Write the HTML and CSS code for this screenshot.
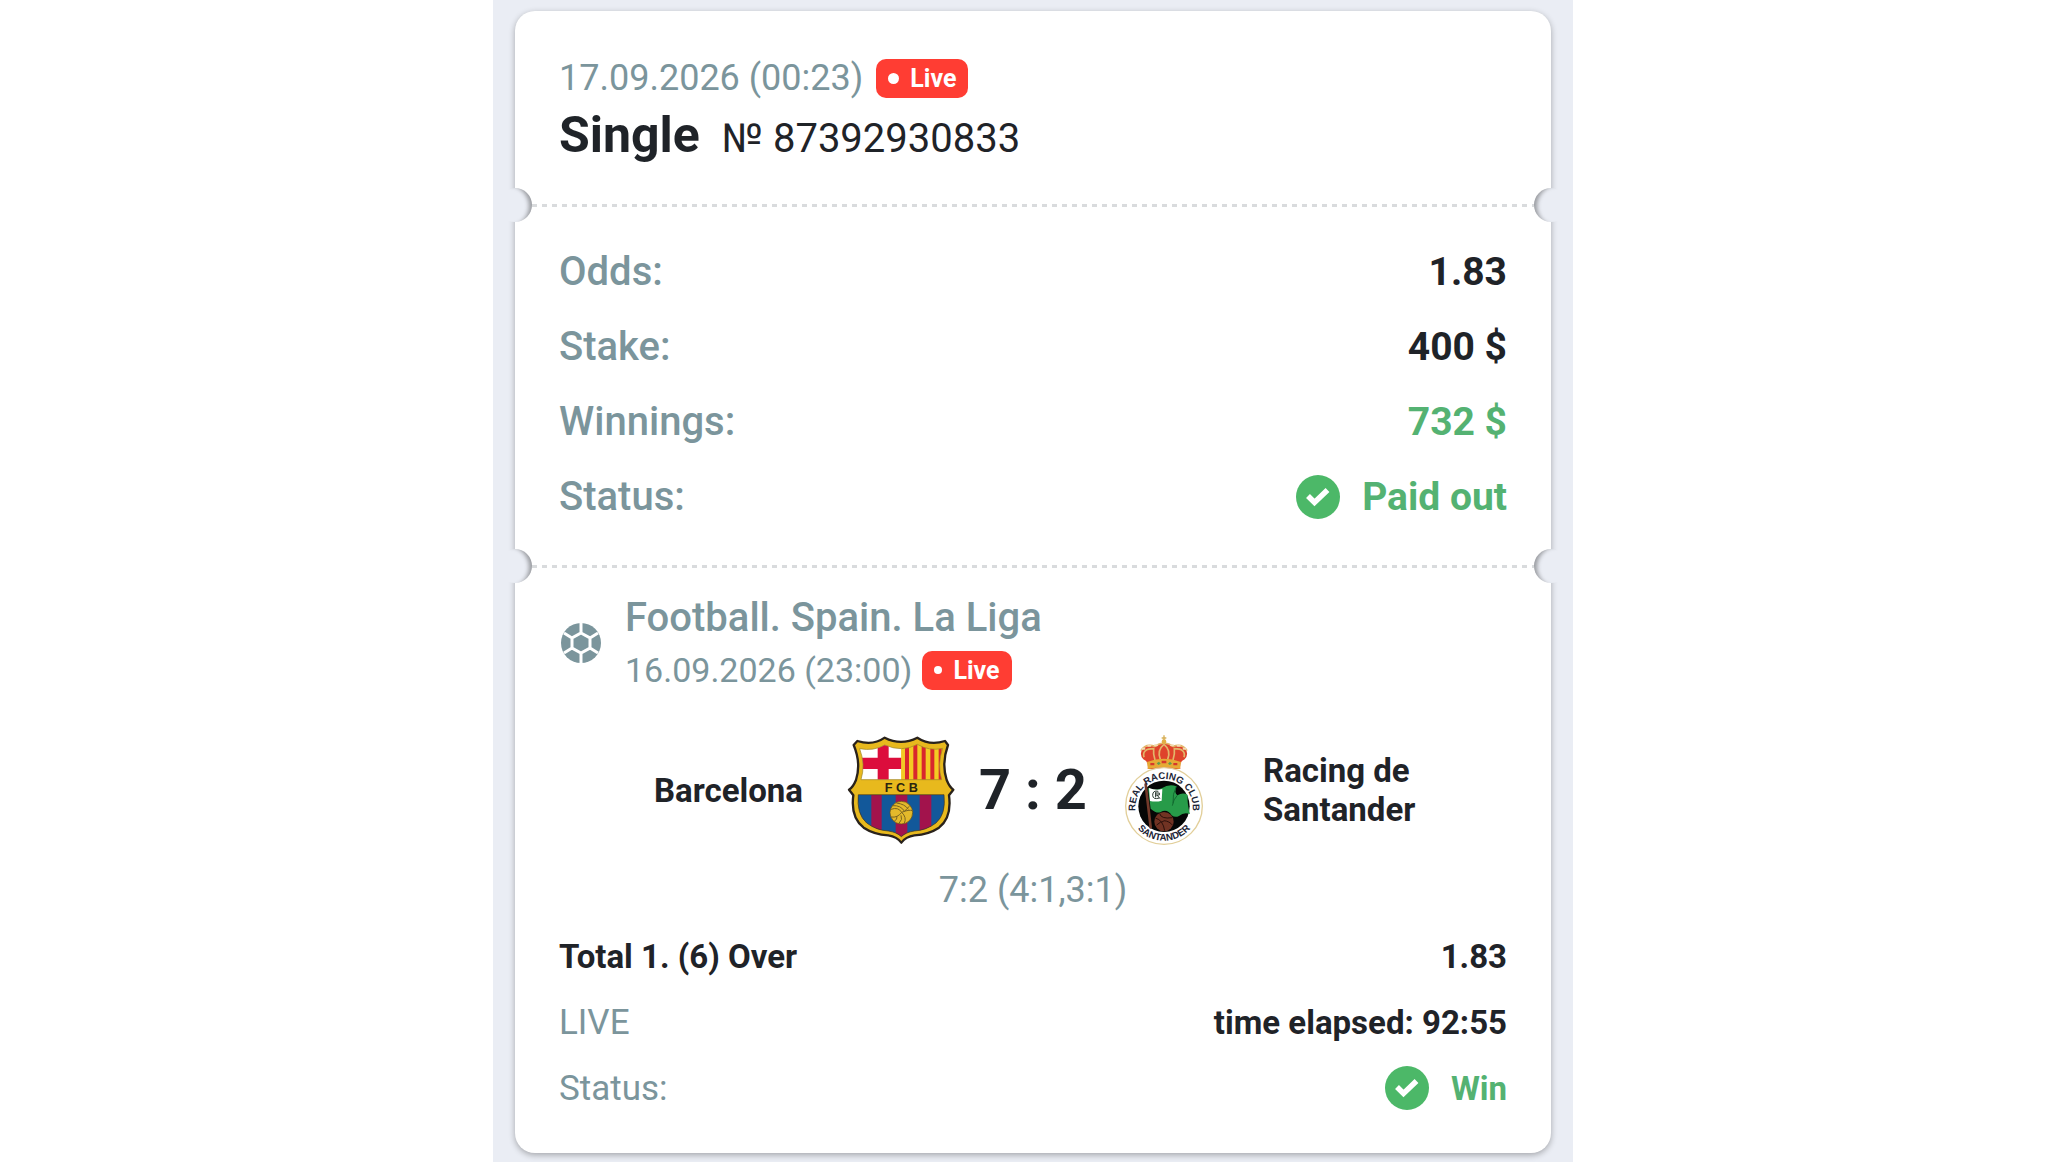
FILE: index.html
```html
<!DOCTYPE html>
<html lang="en">
  <head>
    <meta charset="UTF-8" />
    <meta name="viewport" content="width=device-width, initial-scale=1.0" />
    <link rel="stylesheet" href="styles.css">
    <title>Single № 87392930833</title>
  </head>
  <body>
    <svg class="sprite" aria-hidden="true">
      <symbol id="check" viewBox="0 0 44 44">
        <circle cx="22" cy="22" r="22" fill="#4cb868"/>
        <path d="M12 21 L18.500 27.500 L31.500 15" fill="none" stroke="#fff" stroke-width="5.500"/>
      </symbol>
    </svg>

    <main class="page">
      <article class="ticket">
        <header class="ticket-head">
          <div class="date-row">
            <time>17.09.2026 (00:23)</time>
            <span class="live">Live</span>
          </div>
          <div class="title-row">
            <h1>Single</h1>
            <span class="number">№ 87392930833</span>
          </div>
        </header>

        <section class="summary tear">
          <dl class="rows">
            <div class="row"><dt>Odds:</dt><dd>1.83</dd></div>
            <div class="row"><dt>Stake:</dt><dd>400 $</dd></div>
            <div class="row"><dt>Winnings:</dt><dd class="green">732 $</dd></div>
            <div class="row">
              <dt>Status:</dt>
              <dd class="green"><svg class="check"><use href="#check"/></svg>Paid out</dd>
            </div>
          </dl>
        </section>

        <section class="event tear">
          <div class="league">
            <svg class="ball" viewBox="0 0 40 40" aria-hidden="true">
              <circle cx="20" cy="20" r="20" fill="#7b959c"/>
              <path d="M20 10 L29 15 V25 L20 30 L11 25 V15 Z M20 0 V10 M20 30 V40 M29 15 L37 10 M29 25 L37 30 M11 15 L3 10 M11 25 L3 30" fill="none" stroke="#fff" stroke-width="3"/>
            </svg>
            <div>
              <h2>Football. Spain. La Liga</h2>
              <div class="date-row small">
                <time>16.09.2026 (23:00)</time>
                <span class="live">Live</span>
              </div>
            </div>
          </div>

          <div class="match">
            <div class="team home">Barcelona</div>
            <svg class="crest" viewBox="49 45 330 330" role="img" aria-label="Barcelona crest">
              <defs>
                <clipPath id="fcb-top"><path d="M90 86 Q132 94 165 75 Q190 86 215 86 Q240 86 263 73 Q298 94 339 85 Q322 134 336 179 H94 Q108 134 90 86 Z"/></clipPath>
                <clipPath id="fcb-bottom"><path d="M86 224 H343 Q350 282 319 309 Q290 331 254 333 Q228 337 215 350 Q202 337 176 333 Q140 331 111 309 Q80 282 86 224 Z"/></clipPath>
              </defs>
              <path d="M83 63 Q130 78 165 53 Q214 78 263 53 Q300 78 346 63 L355 75 Q335 130 351 180 Q360 202 371 209 L358 226 Q367 292 328 323 Q298 343 254 346 Q228 350 215 368 Q202 350 176 346 Q132 343 102 323 Q62 292 71 226 L58 209 Q70 202 79 180 Q95 130 72 75 Z" fill="#e8b91d" stroke="#29221b" stroke-width="7" stroke-linejoin="round"/>
              <g clip-path="url(#fcb-top)">
                <path d="M80 60 H215 V185 H80 Z" fill="#fff"/>
                <path d="M144 60 H177 V185 H144 Z M80 113 H215 V147 H80 Z" fill="#dc0d3c"/>
                <path d="M215 60 H345 V185 H215 Z" fill="#f3cb23"/>
                <path d="M226 60 H238 V185 H226 Z M251 60 H263 V185 H251 Z M276 60 H288 V185 H276 Z M302 60 H314 V185 H302 Z M327 60 H336 V185 H327 Z" fill="#d8272d"/>
              </g>
              <path d="M90 86 Q132 94 165 75 Q190 86 215 86 Q240 86 263 73 Q298 94 339 85 Q322 134 336 179 H94 Q108 134 90 86 Z" fill="none" stroke="#9a8327" stroke-width="2"/>
              <text class="fcb" x="215" y="216">F C B</text>
              <g clip-path="url(#fcb-bottom)">
                <path d="M80 224 H350 V350 H80 Z" fill="#12589a"/>
                <path d="M125 224 H156 V350 H125 Z M198 224 H233 V350 H198 Z M270 224 H305 V350 H270 Z" fill="#a2134c"/>
              </g>
              <path d="M86 224 H343 Q350 282 319 309 Q290 331 254 333 Q228 337 215 350 Q202 337 176 333 Q140 331 111 309 Q80 282 86 224 Z" fill="none" stroke="#3b3020" stroke-width="2"/>
              <circle cx="215" cy="278" r="34" fill="#e3b92b" stroke="#5d4b16" stroke-width="2"/>
              <path d="M184 268 Q206 260 216 277 Q204 294 184 291 M200 249 Q226 252 236 268 M188 257 Q214 255 225 275 M216 277 Q238 268 248 272 M216 277 Q232 292 224 310 M214 286 Q220 298 208 310 M202 289 Q203 300 194 303 M240 258 Q231 266 226 273" fill="none" stroke="#7b6420" stroke-width="3"/>
            </svg>
            <div class="score">7 : 2</div>
            <svg class="crest" viewBox="29 45 330 330" role="img" aria-label="Racing de Santander crest">
              <defs>
                <path id="rrc-top" d="M106 276 A86 86 0 1 1 276 276"/>
                <path id="rrc-bottom" d="M89 282 A105 105 0 0 0 293 282"/>
                <clipPath id="rrc-in"><circle cx="191" cy="259" r="77"/></clipPath>
              </defs>
              <path d="M142 147 Q146 125 129 118 Q116 103 126 88 Q140 73 166 79 Q178 67 191 72 Q204 67 216 79 Q242 73 256 88 Q266 103 253 118 Q236 125 240 147 Z" fill="#df432b"/>
              <path d="M131 112 Q124 86 160 86 Q158 102 164 120 M251 112 Q258 86 222 86 Q224 102 218 120 M180 118 Q169 91 191 73 Q213 91 202 118 M122 92 Q135 70 164 79 Q180 68 191 70 Q202 68 218 79 Q247 70 260 92" fill="none" stroke="#e2b66a" stroke-width="5"/>
              <path d="M140 126 Q191 106 242 126 L239 147 Q191 137 143 147 Z" fill="#e6aa35"/>
              <path d="M150 129 h12 v7 h-12 Z M219 129 h12 v7 h-12 Z M184 122 h14 v8 h-14 Z" fill="#d6382c"/>
              <path d="M169 130 l7 -5 l5 6 l-7 4 Z M203 131 l6 -6 l6 6 l-7 4 Z" fill="#5f9c4f"/>
              <path d="M191 46 V71 M184 54 H198" stroke="#d6ae55" stroke-width="4"/>
              <circle cx="191" cy="65" r="7" fill="#e2b044"/>
              <path d="M126 86 h6 M144 77 h6 M164 76 h6 M212 76 h6 M232 77 h6 M250 86 h6" stroke="#f1dcb5" stroke-width="6" stroke-linecap="round"/>
              <circle cx="191" cy="258" r="115" fill="#fff" stroke="#e2cf9a" stroke-width="4"/>
              <circle cx="191" cy="259" r="77" fill="#050706"/>
              <g clip-path="url(#rrc-in)">
                <circle cx="191" cy="305" r="29" fill="#713323"/>
                <path d="M165 294 Q188 300 193 332 M178 280 Q181 298 216 293 M190 302 Q207 303 217 316 M169 315 Q181 304 190 304" fill="none" stroke="#2c110c" stroke-width="3"/>
              </g>
              <path d="M143 204 Q166 213 184 205 Q207 190 228 199 Q221 219 231 226 Q248 216 262 225 Q260 252 269 282 Q250 276 236 288 Q224 294 214 286 Q201 265 181 276 Q170 282 151 266 Z" fill="#279b49"/>
              <path d="M228 199 Q216 222 218 250 M231 226 Q219 238 216 257" fill="none" stroke="#126a30" stroke-width="3"/>
              <path d="M146 204 Q166 212 186 207 L184 242 Q167 247 149 243 Z" fill="#fff"/>
              <path d="M174 214 Q157 210 157 226 Q158 240 177 234 M166 217 V232 M164 219 H177 V225 H165 M170 225 L179 236" fill="none" stroke="#28352d" stroke-width="3"/>
              <path d="M136 193 L151 322" stroke="#723a2a" stroke-width="8" stroke-linecap="round"/>
              <text class="rrc"><textPath href="#rrc-top" startOffset="50%">REAL RACING CLUB</textPath></text>
              <text class="rrc"><textPath href="#rrc-bottom" startOffset="50%">SANTANDER</textPath></text>
            </svg>
            <div class="team away">Racing de Santander</div>
          </div>
          <p class="periods">7:2 (4:1,3:1)</p>

          <dl class="rows details">
            <div class="row outcome"><dt>Total 1. (6) Over</dt><dd>1.83</dd></div>
            <div class="row"><dt>LIVE</dt><dd>time elapsed: 92:55</dd></div>
            <div class="row">
              <dt>Status:</dt>
              <dd class="green"><svg class="check"><use href="#check"/></svg>Win</dd>
            </div>
          </dl>
        </section>
      </article>
    </main>
  </body>
</html>
```
FILE: styles.css
```css
* {
    box-sizing: border-box;
    margin: 0;
    padding: 0;
}
body {
    background: #fff;
    color: #1f2328;
    font-family: Roboto, "Liberation Sans", sans-serif;
}
.sprite {
    display: none;
}
.page {
    max-width: 1080px;
    min-height: 100vh;
    margin: 0 auto;
    padding: 11px 22px 9px;
    background: #eaedf4;
}
.ticket {
    background: #fff;
    border-radius: 20px;
    box-shadow: 0 2px 6px rgba(0, 0, 0, 0.3);
}

/* header */
.ticket-head {
    padding: 47px 44px 35px;
}
.date-row {
    display: flex;
    align-items: center;
    gap: 13px;
    height: 40px;
    color: #7b959c;
    font-size: 36px;
}
.date-row.small {
    gap: 10px;
    font-size: 34px;
}
.live {
    display: flex;
    align-items: center;
    gap: 11px;
    height: 39px;
    padding: 0 12px;
    border-radius: 10px;
    background: #ff3d33;
    color: #fff;
    font-size: 25px;
    font-weight: 700;
}
.live::before {
    content: "";
    width: 11px;
    height: 11px;
    border-radius: 50%;
    background: #fff;
}
.small .live::before {
    width: 8px;
    height: 8px;
}
.title-row {
    display: flex;
    align-items: baseline;
    gap: 22px;
    margin-top: 7px;
    line-height: 60px;
}
h1 {
    font-size: 50px;
    font-weight: 700;
}
.number {
    font-size: 40px;
}

/* tear line with a notch on each side */
.tear {
    position: relative;
    background: repeating-linear-gradient(90deg, #d9dbdd 0 5px, transparent 5px 10px) 17px 0 / calc(100% - 34px) 3px no-repeat;
}
.tear::before,
.tear::after {
    content: "";
    position: absolute;
    top: -16px;
    left: -17px;
    width: 34px;
    height: 34px;
    border-radius: 50%;
    background: #eaedf4;
    box-shadow: inset -7px 1px 4px -4px rgba(0, 0, 0, 0.35);
}
.tear::after {
    left: auto;
    right: -17px;
    box-shadow: inset 7px 1px 4px -4px rgba(0, 0, 0, 0.35);
}

/* label / value rows */
.rows {
    display: flex;
    flex-direction: column;
    gap: 28px;
    font-size: 39px;
}
.row {
    display: flex;
    align-items: center;
    justify-content: space-between;
    height: 47px;
}
.row dt {
    color: #7b959c;
    font-size: 40px;
    font-weight: 500;
}
.row dd {
    display: flex;
    align-items: center;
    gap: 22px;
    font-weight: 700;
}
.row .green {
    color: #54b272;
}
.check {
    width: 44px;
    height: 44px;
}
.summary {
    padding: 44px 44px 45px;
}

/* event */
.event {
    padding: 30px 44px 43px;
}
.league {
    display: flex;
    align-items: center;
    gap: 24px;
    padding-left: 2px;
}
.ball {
    width: 40px;
    height: 40px;
}
h2 {
    margin-bottom: 9px;
    color: #7b959c;
    font-size: 40px;
    font-weight: 500;
    line-height: 46px;
}
.match {
    display: grid;
    grid-template-columns: 1fr 110px 110px 110px 1fr;
    align-items: center;
    column-gap: 22px;
    margin-top: 45px;
}
.crest {
    width: 110px;
    height: 110px;
}
.team {
    font-size: 33px;
    font-weight: 700;
    line-height: 39px;
}
.home {
    padding-right: 21px;
    text-align: right;
}
.away {
    padding-left: 21px;
}
.score {
    font-size: 56px;
    font-weight: 700;
    text-align: center;
    white-space: nowrap;
}
.fcb {
    font: 700 38px "Liberation Sans", sans-serif;
    fill: #2b2410;
    text-anchor: middle;
}
.rrc {
    font: 700 29px "Liberation Sans", sans-serif;
    fill: #1d2536;
    text-anchor: middle;
}
.periods {
    margin: 25px 0 24px;
    color: #7b959c;
    font-size: 36px;
    line-height: 40px;
    text-align: center;
}
.details {
    gap: 22px;
    font-size: 33px;
}
.details .row {
    height: 44px;
}
.details dt {
    font-size: 35px;
    font-weight: 400;
}
.details .outcome dt {
    color: #1f2328;
    font-size: 33px;
    font-weight: 700;
}
```
